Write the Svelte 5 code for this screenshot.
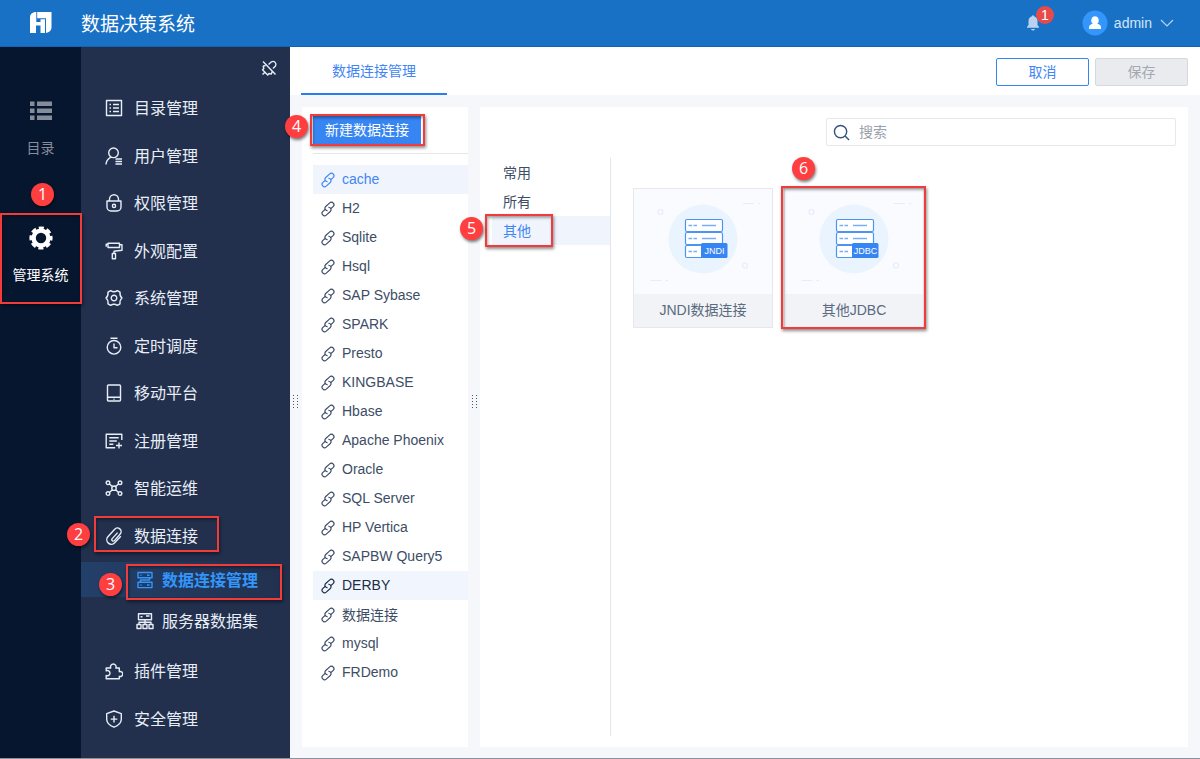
<script>
    const menuItems = [
        { label: '目录管理', icon: 'M1.5 1.5h15v15h-15zM4.5 5.5H6M8 5.5h6M4.5 9H6M8 9h6M4.5 12.5H6M8 12.5h6' },
        { label: '用户管理', icon: 'M8.5 1a4.8 4.8 0 1 1 0 9.6a4.8 4.8 0 1 1 0-9.6zM5.5 10.3C2.5 12 1.2 14 1 17.5M10.5 12H17M10.5 14.5H17M10.5 17H17' },
        { label: '权限管理', icon: 'M4.5 7V5.2a4.5 4.5 0 0 1 9 0V7M2 7h14v6a4 4 0 0 1-4 4H6a4 4 0 0 1-4-4zM9 10.3a1.6 1.6 0 1 1 0 3.2a1.6 1.6 0 1 1 0-3.2z' },
        { label: '外观配置', icon: 'M3 1.2h11.5v4.3H3zM3 2.2H1.2v2.6M14.5 2.8H17v5.4L9 9.2v2M7.3 11.5h3.2v5.2H7.3z' },
        { label: '系统管理', icon: 'M5.6 1.6Q9 4 12.4 1.6L15 3.2Q14.6 7 17 9Q14.6 11 15 14.8L12.4 16.4Q9 14 5.6 16.4L3 14.8Q3.4 11 1 9Q3.4 7 3 3.2zM9 6.2a2.8 2.8 0 1 1 0 5.6a2.8 2.8 0 1 1 0-5.6z' },
        { label: '定时调度', icon: 'M9 3.5a6.8 6.8 0 1 1 0 13.6a6.8 6.8 0 1 1 0-13.6zM5.5 1.2h7M9 6.5v4.3h3.5' },
        { label: '移动平台', icon: 'M3.5 1h11q1 0 1 1v14q0 1-1 1h-11q-1 0-1-1V2q0-1 1-1zM2.5 13.2h13M8.5 15.2h1' },
        { label: '注册管理', icon: 'M16.8 8V2.2H1.2v13.6h9M4.3 5.7h9.4M4.3 9h7.5M4.3 12.3h4M14 10.5v6M11 13.5h6' },
        { label: '智能运维', icon: 'M3 2a1.8 1.8 0 1 1 0 3.6a1.8 1.8 0 1 1 0-3.6zM15 2a1.8 1.8 0 1 1 0 3.6a1.8 1.8 0 1 1 0-3.6zM3 12.8a1.8 1.8 0 1 1 0 3.6a1.8 1.8 0 1 1 0-3.6zM15 12.8a1.8 1.8 0 1 1 0 3.6a1.8 1.8 0 1 1 0-3.6zM9 7a2.2 2.2 0 1 1 0 4.4a2.2 2.2 0 1 1 0-4.4zM4.5 5l2.8 2.6M13.5 5l-2.8 2.6M4.5 13.4l2.8-2.7M13.5 13.4l-2.8-2.7' },
        {
            label: '数据连接',
            icon: 'M12.6 5.6L7.2 11.6a1.4 1.4 0 0 0 2.2 2L15.2 7a3.6 3.6 0 0 0-5.5-4.7L2.900 9.800a4.500 4.500 0 0 0 6.800 5.900L15.800 9.200',
            children: [
                { label: '数据连接管理', active: true, icon: 'M2 1.5h14v5.3H2zM2 11.3h14v5.3H2zM4.5 4.2h1M11 4.2h2.500M4.5 14h1M11 14h2.500M13.500 6.800V9H4.500V11.300' },
                { label: '服务器数据集', icon: 'M2.5 1.8h13v6h-13zM4.5 4.8h2M9 7.8v5M3 12.5V10.2h12v2.3M1 12.5h4v4H1zM7 12.5h4v4H7zM13 12.5h4v4h-4zM10 4h3.5' }
            ]
        },
        { label: '插件管理', icon: 'M1.2 6h4.6a2.8 2.8 0 1 1 5 0h3.5v3.7a2.5 2.5 0 1 1 0 4.6v2.5H1.2v-3.4a2.6 2.6 0 1 0 0-4.6z' },
        { label: '安全管理', icon: 'M9 1L16.3 3.6V9.5Q16 14.5 9 17.2Q2 14.5 1.7 9.5V3.6zM9 5.8v6.6M5.7 9.1h6.6' },
        { label: '模板认证', icon: 'M2 4h14v12H2z' }
    ];

    const connections = [
        'cache', 'H2', 'Sqlite', 'Hsql', 'SAP Sybase', 'SPARK', 'Presto', 'KINGBASE', 'Hbase',
        'Apache Phoenix', 'Oracle', 'SQL Server', 'HP Vertica', 'SAPBW Query5', 'DERBY',
        '数据连接', 'mysql', 'FRDemo'
    ];
    const categories = ['常用', '所有', '其他'];
    const drivers = [
        { tag: 'JNDI', label: 'JNDI数据连接' },
        { tag: 'JDBC', label: '其他JDBC' }
    ];

    // Guide steps drawn over the page: box = x, y, w, h and badge = x, y
    const steps = [
        { box: [0, 213, 82, 91], badge: [31, 183] },
        { box: [94, 516, 125, 36], badge: [67, 523] },
        { box: [126, 564, 156, 36], badge: [99, 573] },
        { box: [310, 114, 115, 32], badge: [285, 115] },
        { box: [485, 214, 68, 33], badge: [460, 217] },
        { box: [781, 186, 145, 143], badge: [792, 157] }
    ];

    let selected = $state('cache');
    let hovered = $state('DERBY');
    let category = $state('其他');
    let keyword = $state('');
</script>

{#snippet lineIcon(d)}
    <svg class="line-icon" viewBox="0 0 18 18" aria-hidden="true"><path {d} /></svg>
{/snippet}

<div class="app">
    <header class="header">
        <svg class="logo" viewBox="0 0 22 22" aria-hidden="true">
            <path fill="#fff" d="M5 0H6.300V10H10.500V7.300H15V21H10.500V13.500H6V21H0V5Q0 1 5 0z" />
            <path fill="#fff" d="M7.200 0H21.500V16Q21 20 16 21V6.200H7.200z" />
        </svg>
        <h1>数据决策系统</h1>
        <button class="bell" aria-label="消息">
            <svg viewBox="0 0 14 16" aria-hidden="true"><path fill="#b7d3ef" d="M6 1.2a1 1 0 0 1 2 0Q11.5 2.2 11.5 6v4l1.5 2v.7H1V12l1.5-2V6Q2.5 2.2 6 1.2zM5 14h4q-.5 1.500-2 1.500T5 14z" /></svg>
            <span class="count">1</span>
        </button>
        <button class="account">
            <svg class="avatar" viewBox="0 0 26 26" aria-hidden="true">
                <circle cx="13" cy="13" r="12.500" fill="#3296fa" />
                <path fill="#fff" d="M13 6.200a3.900 4.200 0 0 1 2.200 7.600Q19 14.800 19 17.300V19H7v-1.700Q7 14.800 10.800 13.800A3.900 4.200 0 0 1 13 6.200z" />
            </svg>
            <span>admin</span>
            <svg class="chevron" viewBox="0 0 14 8" aria-hidden="true"><path d="M1 1l6 6 6-6" fill="none" stroke="#b7d3ef" stroke-width="1.2" /></svg>
        </button>
    </header>

    <div class="body">
        <nav class="rail">
            <button>
                <svg viewBox="0 0 24 24" aria-hidden="true">
                    <path fill="#858c9a" d="M1 2.500h4.500v4.500H1zM8 2.500h15v4.500H8zM1 9.500h4.500V14H1zM8 9.500h15V14H8zM1 16.500h4.500V21H1zM8 16.500h15V21H8z" />
                </svg>
                <span>目录</span>
            </button>
            <button class="active">
                <svg viewBox="0 0 24 24" aria-hidden="true">
                    <circle cx="12" cy="12" r="7.400" fill="none" stroke="#fff" stroke-width="4.400" />
                    <circle cx="12" cy="12" r="10" fill="none" stroke="#fff" stroke-width="3.200" stroke-dasharray="5 2.854" stroke-dashoffset="2.500" />
                </svg>
                <span>管理系统</span>
            </button>
        </nav>

        <nav class="menu">
            <button class="pin" aria-label="取消固定">
                <svg class="line-icon" viewBox="0 0 18 18" aria-hidden="true">
                    <path d="M3 2.500L15.500 15.500M8.500 5.500L11.500 2.800a3 3 0 0 1 4 4.200L13 9.500M5.500 6.500L3.200 7.200l.6 2.300-1.300 1.200 5.200 5.300 1.400-1.500 2.200.6.8-2.400M5 13.200l-2.500 2.400" />
                </svg>
            </button>
            <ul>
                {#each menuItems as item}
                    <li>
                        <a href="#menu">{@render lineIcon(item.icon)}<span>{item.label}</span></a>
                        {#if item.children}
                            <div class="submenu">
                                {#each item.children as child}
                                    <a href="#menu" class:active={child.active}>{@render lineIcon(child.icon)}<span>{child.label}</span></a>
                                {/each}
                            </div>
                        {/if}
                    </li>
                {/each}
            </ul>
        </nav>

        <main>
            <div class="toolbar">
                <a class="tab" href="#connections">数据连接管理</a>
                <div class="actions">
                    <button class="cancel">取消</button>
                    <button class="save" disabled>保存</button>
                </div>
            </div>

            <div class="content">
                <section class="panel list-panel">
                    <div class="create-row">
                        <button class="create">新建数据连接</button>
                    </div>
                    <ul class="connections">
                        {#each connections as name}
                            <li>
                                <button
                                    class:selected={selected === name}
                                    class:hovered={hovered === name}
                                    onclick={() => (selected = name)}
                                    onmouseenter={() => (hovered = name)}
                                >
                                    <svg viewBox="0 0 16 16" aria-hidden="true">
                                        <path transform="rotate(-42 8 8)" d="M10.500 9.600H13.400a2.500 2.500 0 0 0 0-5H8a2.500 2.500 0 0 0-1.400 4.500M5.500 6.400H2.600a2.500 2.500 0 0 0 0 5H8a2.500 2.500 0 0 0 1.400-4.500" />
                                    </svg>
                                    <span>{name}</span>
                                </button>
                            </li>
                        {/each}
                    </ul>
                </section>

                <section class="panel driver-panel">
                    <label class="search">
                        <svg viewBox="0 0 18 18" aria-hidden="true"><circle cx="8" cy="8" r="6.500" /><path d="M12.800 12.800L17 17" /></svg>
                        <input type="text" placeholder="搜索" aria-label="搜索" bind:value={keyword} />
                    </label>
                    <div class="drivers">
                        <div class="categories">
                            {#each categories as name}
                                <button class:selected={category === name} onclick={() => (category = name)}>{name}</button>
                            {/each}
                        </div>
                        <div class="cards">
                            {#each drivers as driver}
                                <button class="card">
                                    <svg viewBox="0 0 138 105" aria-hidden="true">
                                        <circle cx="69" cy="50" r="34.500" fill="#eaf4fe" />
                                        <g fill="none" stroke="#e3edfb" stroke-width="1.200">
                                            <circle cx="26.500" cy="23" r="2.500" />
                                            <circle cx="111" cy="76.500" r="2.500" />
                                            <path d="M109 14.500h11M124 14.500h2.500M16.500 91.500h11M31.500 91.500h2.500" />
                                        </g>
                                        <g fill="#fff" stroke="#4a94f3" stroke-width="1.200">
                                            <rect x="51.500" y="30.500" width="37" height="12" rx="1.500" />
                                            <rect x="51.500" y="43.500" width="37" height="12" rx="1.500" />
                                            <rect x="51.500" y="56.500" width="37" height="12" rx="1.500" />
                                        </g>
                                        <path stroke="#76aef5" stroke-width="1.500" d="M54.500 36.500h3.500M59.500 36.500H63M68 36.500h14M54.500 49.500h3.500M59.500 49.500H63M68 49.500h14M54.500 62.500h3.500M59.500 62.500H63" />
                                        <rect x="67" y="54" width="26.500" height="15" rx="1.500" fill="#3685f2" />
                                        <text x="80.500" y="65" text-anchor="middle">{driver.tag}</text>
                                    </svg>
                                    <span>{driver.label}</span>
                                </button>
                            {/each}
                        </div>
                    </div>
                </section>
            </div>
            <div class="grip grip-menu"></div>
            <div class="grip grip-list"></div>
        </main>
    </div>

    {#each steps as { box, badge }, i}
        <div class="step-box" style="left: {box[0]}px; top: {box[1]}px; width: {box[2]}px; height: {box[3]}px"></div>
        <span class="step-badge" style="left: {badge[0]}px; top: {badge[1]}px">{i + 1}</span>
    {/each}
</div>

<style>
    :global(body) {
        font-family: "Liberation Sans", "Noto Sans CJK SC", sans-serif;
        font-size: 14px;
        color: #3d4d66;
    }

    .app {
        position: relative;
        display: flex;
        flex-direction: column;
        height: 100vh;
        overflow: hidden;
        box-sizing: border-box;
        border-bottom: 1px solid #8d919b;
    }

    button {
        font: inherit;
        color: inherit;
        background: none;
        border: none;
        padding: 0;
        cursor: pointer;
    }

    a {
        color: inherit;
        text-decoration: none;
    }

    ul {
        list-style: none;
        margin: 0;
        padding: 0;
    }

    .header {
        display: flex;
        align-items: center;
        flex: none;
        height: 46px;
        padding: 0 26px 0 30px;
        background: #1971c6;
        border-bottom: 1px solid #1463b0;
        color: #fff;
    }

    .logo {
        width: 22px;
        height: 22px;
    }

    h1 {
        flex: 1;
        margin: 0 0 0 29px;
        padding-bottom: 2px;
        font-size: 19px;
        font-weight: 400;
    }

    .bell {
        position: relative;
        width: 14px;
        height: 16px;
        margin-right: 42px;
    }

    .bell svg {
        display: block;
        width: 14px;
        height: 16px;
    }

    .count {
        position: absolute;
        left: 10px;
        top: -9px;
        width: 18px;
        height: 18px;
        border-radius: 50%;
        background: #e64b4b;
        color: #fff;
        line-height: 18px;
    }

    .account {
        display: flex;
        align-items: center;
        color: #d3e5f7;
    }

    .avatar {
        width: 26px;
        height: 26px;
        margin-right: 6px;
    }

    .chevron {
        width: 14px;
        height: 8px;
        margin-left: 8px;
    }

    .body {
        display: flex;
        flex: 1;
        min-height: 0;
    }

    .rail {
        display: flex;
        flex-direction: column;
        gap: 68px;
        flex: none;
        width: 81px;
        padding-top: 52px;
        box-sizing: border-box;
        background: #07162f;
    }

    .rail button {
        display: flex;
        flex-direction: column;
        align-items: center;
        gap: 15px;
        color: #858c9a;
        line-height: 20px;
        border-left: 2px solid transparent;
        border-right: 2px solid transparent;
    }

    .rail button.active {
        color: #fff;
        border-left-color: #fff;
    }

    .rail svg {
        width: 24px;
        height: 24px;
    }

    .menu {
        display: flex;
        flex-direction: column;
        flex: none;
        width: 209px;
        overflow: hidden;
        background: #22304d;
        color: #e8eef8;
        font-size: 16px;
    }

    .line-icon {
        flex: none;
        width: 18px;
        height: 18px;
    }

    .line-icon path {
        fill: none;
        stroke: currentColor;
        stroke-width: 1.400;
        stroke-linejoin: round;
    }

    .pin {
        align-self: flex-end;
        flex: none;
        height: 37px;
        padding: 4px 12px 0;
        line-height: 0;
    }

    .menu a {
        display: flex;
        align-items: center;
        gap: 11px;
        height: 48px;
        padding-left: 24px;
    }

    .menu a span,
    .connections span {
        padding-bottom: 2px;
    }

    .menu li:nth-child(even) > a {
        height: 47px;
    }

    .submenu {
        display: flex;
        flex-direction: column;
        gap: 6px;
        padding: 3px 0 9px;
    }

    .submenu a {
        height: 35px;
        gap: 8px;
        padding-left: 55px;
    }

    .submenu a.active {
        background: linear-gradient(to right, #23406a, #22304d);
        color: #3296fa;
        font-weight: 700;
    }

    main {
        position: relative;
        display: flex;
        flex-direction: column;
        flex: 1;
        min-width: 0;
        background: #f5f7fa;
    }

    .toolbar {
        display: flex;
        justify-content: space-between;
        flex: none;
        height: 48px;
        padding: 0 12px 0 11px;
        background: #fff;
    }

    .tab {
        padding: 0 31px;
        border-bottom: 2px solid #2b7ced;
        color: #4285f4;
        line-height: 48px;
        box-sizing: border-box;
    }

    .actions {
        display: flex;
        align-items: center;
        gap: 6px;
        padding-top: 2px;
    }

    .actions button {
        width: 93px;
        height: 28px;
        padding-bottom: 2px;
        border: 1px solid #3685f2;
        border-radius: 2px;
        color: #4285f4;
    }

    .actions .save {
        border-color: #d5d8de;
        background: #eaebef;
        color: #a3a8b1;
    }

    .content {
        display: flex;
        flex: 1;
        gap: 12px;
        min-height: 0;
        padding: 12px 12px 11px;
    }

    .panel {
        background: #fff;
    }

    .list-panel {
        flex: none;
        width: 166px;
        padding-left: 11px;
        box-sizing: border-box;
    }

    .create-row {
        display: flex;
        align-items: center;
        height: 46px;
        border-bottom: 1px solid #e4e6ea;
    }

    .create {
        height: 28px;
        padding: 0 12px 2px;
        background: #3685f2;
        color: #fff;
    }

    .connections {
        padding-top: 11px;
    }

    .connections button {
        display: flex;
        align-items: center;
        gap: 6px;
        width: 100%;
        height: 29px;
        padding-left: 7px;
    }

    .connections svg {
        width: 16px;
        height: 16px;
        fill: none;
        stroke: currentColor;
        stroke-width: 1.200;
    }

    .connections .hovered {
        background: #f1f6fe;
        color: #1f2d45;
    }

    .connections .selected {
        background: #f0f5fd;
        color: #4285f4;
    }

    .driver-panel {
        display: flex;
        flex-direction: column;
        flex: 1;
        min-width: 0;
        padding: 11px 12px;
    }

    .search {
        display: flex;
        align-items: center;
        gap: 9px;
        align-self: flex-end;
        width: 350px;
        height: 28px;
        padding-left: 6px;
        border: 1px solid #e6e8ec;
        border-radius: 2px;
        box-sizing: border-box;
    }

    .search svg {
        width: 17px;
        height: 17px;
        fill: none;
        stroke: #33537a;
        stroke-width: 1.500;
    }

    .search input {
        flex: 1;
        min-width: 0;
        padding: 0;
        border: none;
        outline: none;
        background: none;
        font: inherit;
        color: inherit;
    }

    .search input::placeholder {
        color: #9aa1ac;
    }

    .drivers {
        display: flex;
        flex: 1;
        margin-top: 12px;
    }

    .categories {
        display: flex;
        flex-direction: column;
        width: 118px;
        border-right: 1px solid #e4e6ee;
    }

    .categories button {
        height: 29px;
        padding: 0 0 2px 11px;
        text-align: left;
    }

    .categories .selected {
        background: #f0f5fd;
        color: #4285f4;
    }

    .cards {
        display: flex;
        flex-wrap: wrap;
        align-content: flex-start;
        align-items: flex-start;
        gap: 11px;
        padding: 30px 22px;
    }

    .card {
        display: flex;
        flex-direction: column;
        width: 140px;
        border: 1px solid #e6e8ee;
        background: #fafbfe;
        color: #5a6b80;
    }

    .card svg {
        width: 100%;
        height: 105px;
    }

    .card text {
        font-size: 9px;
        fill: #fff;
    }

    .card span {
        align-self: stretch;
        background: #f2f3f7;
        line-height: 33px;
    }

    .grip {
        position: absolute;
        top: 50%;
        width: 5px;
        height: 15px;
        margin-top: -8px;
        background: repeating-linear-gradient(to bottom, transparent 0 1px, #f5f7fa 1px 3px),
            repeating-linear-gradient(to right, #4c586c 0 1px, #f5f7fa 1px 4px);
    }

    .grip-menu {
        left: 3px;
    }

    .grip-list {
        left: 182px;
    }

    .step-box {
        position: absolute;
        border: 2px solid #f23c3c;
        box-sizing: border-box;
        box-shadow: 1px 2px 3px rgba(0, 0, 0, 0.45), inset 1px 2px 3px rgba(0, 0, 0, 0.35);
        pointer-events: none;
    }

    .step-badge {
        position: absolute;
        width: 23px;
        height: 23px;
        border-radius: 50%;
        background: #ff3f3f;
        box-shadow: 1px 2px 3px rgba(0, 0, 0, 0.5);
        color: #fff;
        font-family: "Open Sans", sans-serif;
        font-size: 16px;
        line-height: 23px;
        text-align: center;
        pointer-events: none;
    }
</style>
